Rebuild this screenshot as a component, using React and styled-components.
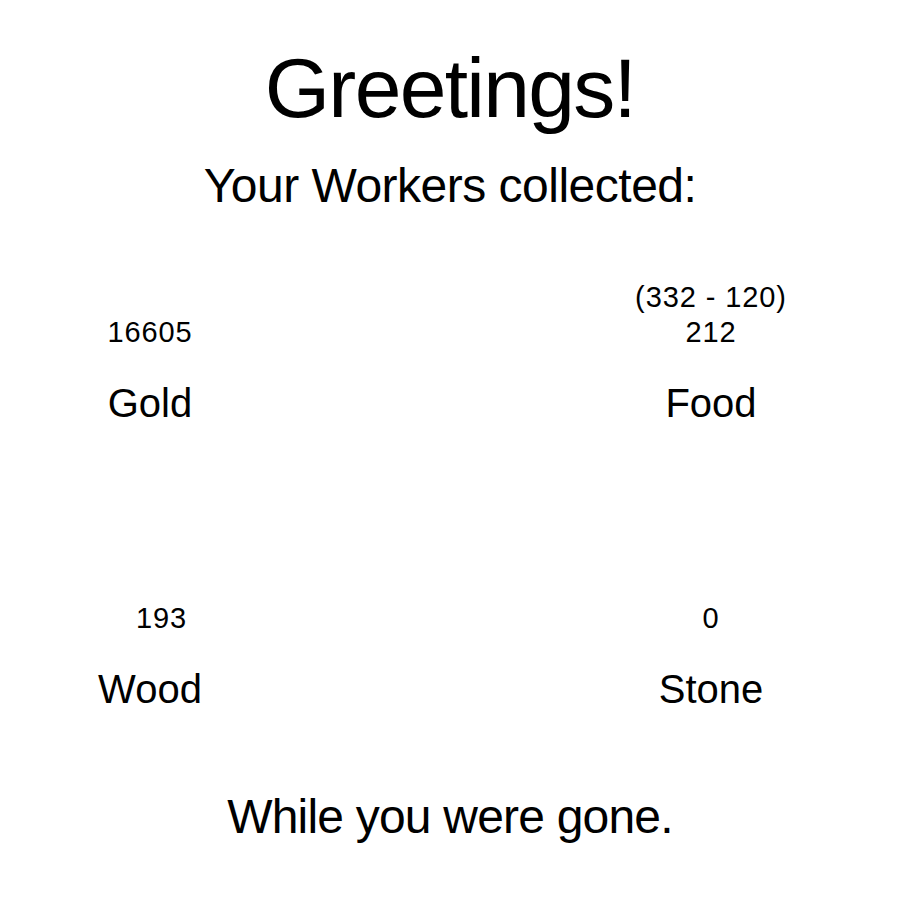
import React from 'react';
import styled, { createGlobalStyle } from 'styled-components';

const GlobalStyle = createGlobalStyle`
  html, body {
    margin: 0;
    padding: 0;
    background: #ffffff;
  }
  body {
    font-family: "Liberation Sans", Arial, sans-serif;
    color: #000000;
  }
`;

const Page = styled.div`
  display: flex;
  flex-direction: column;
  align-items: center;
  width: 900px;
  height: 900px;
  padding-top: 38px;
  box-sizing: border-box;
`;

const Title = styled.h1`
  margin: 0;
  font-size: 84px;
  line-height: 1.2;
  font-weight: 400;
  letter-spacing: -1.7px;
`;

const Subtitle = styled.h2`
  margin: ${({ $top }) => $top}px 0 0;
  font-size: 48px;
  line-height: 1.2;
  font-weight: 400;
  letter-spacing: ${({ $spacing }) => $spacing}px;
`;

const ResourceGrid = styled.div`
  display: grid;
  grid-template-columns: 200px 200px;
  justify-content: space-between;
  row-gap: 128px;
  width: 100%;
  padding: 0 89px 0 50px;
  margin-top: 55px;
  box-sizing: border-box;
`;

const Cell = styled.div`
  display: flex;
  flex-direction: column;
  align-items: center;
`;

const Amount = styled.div`
  display: flex;
  flex-direction: column;
  justify-content: flex-end;
  align-items: center;
  height: 80px;
  padding-left: ${({ $indent }) => $indent || 0}px;
  font-size: 29px;
  line-height: 1.2;
  letter-spacing: 0.9px;
`;

const Label = styled.div`
  margin-top: 30px;
  font-size: 40px;
  line-height: 1.2;
`;

const resources = [
  { name: 'Gold', lines: ['16605'] },
  { name: 'Food', lines: ['(332 - 120)', '212'] },
  { name: 'Wood', lines: ['193'], indent: 23 },
  { name: 'Stone', lines: ['0'] },
];

const App = () => (
  <>
    <GlobalStyle />
    <Page>
      <Title>Greetings!</Title>
      <Subtitle $top={18} $spacing={-0.5}>Your Workers collected:</Subtitle>
      <ResourceGrid>
        {resources.map((r) => (
          <Cell key={r.name}>
            <Amount $indent={r.indent}>
              {r.lines.map((l) => (
                <span key={l}>{l}</span>
              ))}
            </Amount>
            <Label>{r.name}</Label>
          </Cell>
        ))}
      </ResourceGrid>
      <Subtitle $top={75} $spacing={-0.8}>While you were gone.</Subtitle>
    </Page>
  </>
);

export default App;
